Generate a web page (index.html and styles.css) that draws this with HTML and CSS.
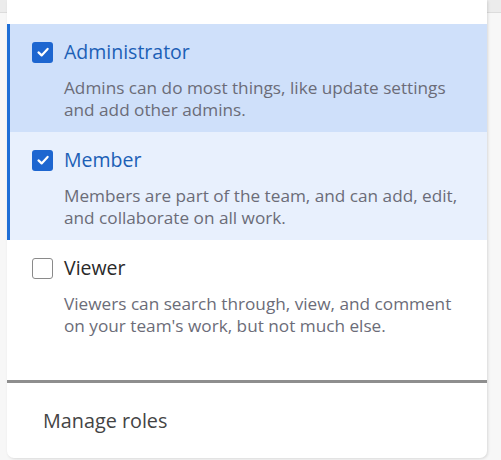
FILE: index.html
```html
<!DOCTYPE html>
<html>
<head>
<meta charset="utf-8">
<link rel="stylesheet" href="styles.css">
</head>
<body>
<div class="panel">
  <div class="top-space"></div>
  <div class="role role-admin">
    <div class="role-head">
      <span class="check checked"><svg viewBox="0 0 20 20" width="20" height="20"><path d="M5.5 10.4 L8.6 13.4 L14.6 6.9" fill="none" stroke="#fff" stroke-width="2.2" stroke-linecap="round" stroke-linejoin="round"/></svg></span>
      <span class="role-title">Administrator</span>
    </div>
    <p class="role-desc">Admins can do most things, like update settings and add other admins.</p>
  </div>
  <div class="role role-member">
    <div class="role-head">
      <span class="check checked"><svg viewBox="0 0 20 20" width="20" height="20"><path d="M5.5 10.4 L8.6 13.4 L14.6 6.9" fill="none" stroke="#fff" stroke-width="2.2" stroke-linecap="round" stroke-linejoin="round"/></svg></span>
      <span class="role-title">Member</span>
    </div>
    <p class="role-desc">Members are part of the team, and can add, edit, and collaborate on all work.</p>
  </div>
  <div class="role role-viewer">
    <div class="role-head">
      <span class="check"></span>
      <span class="role-title">Viewer</span>
    </div>
    <p class="role-desc">Viewers can search through, view, and comment on your team's work, but not much else.</p>
  </div>
  <div class="divider"></div>
  <div class="footer">Manage roles</div>
</div>
</body>
</html>
```
FILE: styles.css
```css
html, body {
  margin: 0;
  padding: 0;
}
body {
  width: 501px;
  height: 460px;
  overflow: hidden;
  background: linear-gradient(#ececec 0, #ececec 12px, #dcdcdc 12px, #dcdcdc 13px, #f7f7f7 13px);
  font-family: "Open Sans", "Noto Sans", sans-serif;
}
.panel {
  margin-left: 7px;
  width: 480px;
  height: 458px;
  background: #fff;
  border-radius: 0 0 7px 7px;
  box-shadow: 1px 1px 3px rgba(0,0,0,0.12);
  display: flex;
  flex-direction: column;
}
.top-space {
  height: 24px;
}
.role {
  padding: 16px 20px 10px 22px;
  border-left: 3px solid transparent;
  box-sizing: border-box;
  height: 108px;
}
.role-admin {
  background: #cfe0fa;
  border-left-color: #1f6fd6;
}
.role-member {
  background: #e8f0fd;
  border-left-color: #1f6fd6;
}
.role-head {
  display: flex;
  align-items: center;
  gap: 11px;
  height: 24px;
}
.check {
  width: 21px;
  height: 21px;
  box-sizing: border-box;
  border-radius: 3px;
  border: 1.5px solid #8a8a8a;
  background: #fff;
  display: flex;
  align-items: center;
  justify-content: center;
}
.check.checked {
  background: #1d66d0;
  border: none;
}
.role-title {
  font-size: 19.5px;
  color: #1c5fb6;
  line-height: 24px;
}
.role-viewer .role-title {
  color: #2a2a2a;
}
.role-desc {
  margin: 13px 0 0 32px;
  font-size: 17.2px;
  line-height: 22px;
  color: #6b6c78;
}
.divider {
  margin-top: 32px;
  height: 3px;
  background: #8e8e8e;
}
.footer {
  padding: 26px 0 0 36px;
  font-size: 19.8px;
  line-height: 24px;
  color: #444;
}
```
